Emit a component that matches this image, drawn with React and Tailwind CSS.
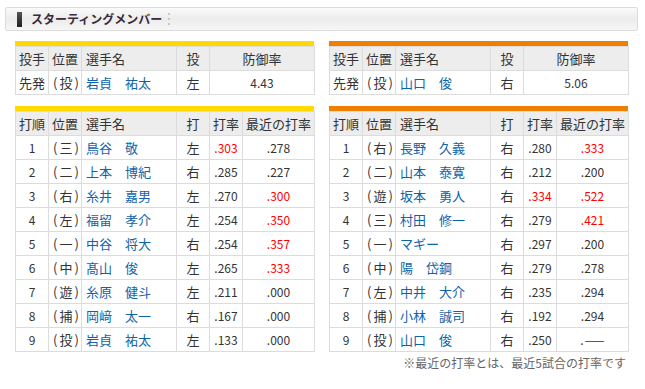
import React from 'react';

const font = { fontFamily: '"Noto Sans CJK JP", "Noto Sans", sans-serif' };

const pitchers = {
  home: { role: '先発', pos: '投', name: '岩貞　祐太', hand: '左', era: '4.43' },
  away: { role: '先発', pos: '投', name: '山口　俊', hand: '右', era: '5.06' },
};

const homeLineup = [
  ['1', '三', '鳥谷　敬', '左', '.303', '.278', true, false],
  ['2', '二', '上本　博紀', '右', '.285', '.227', false, false],
  ['3', '右', '糸井　嘉男', '左', '.270', '.300', false, true],
  ['4', '左', '福留　孝介', '左', '.254', '.350', false, true],
  ['5', '一', '中谷　将大', '右', '.254', '.357', false, true],
  ['6', '中', '髙山　俊', '左', '.265', '.333', false, true],
  ['7', '遊', '糸原　健斗', '左', '.211', '.000', false, false],
  ['8', '捕', '岡﨑　太一', '右', '.167', '.000', false, false],
  ['9', '投', '岩貞　祐太', '左', '.133', '.000', false, false],
];

const awayLineup = [
  ['1', '右', '長野　久義', '右', '.280', '.333', false, true],
  ['2', '二', '山本　泰寛', '右', '.212', '.200', false, false],
  ['3', '遊', '坂本　勇人', '右', '.334', '.522', true, true],
  ['4', '三', '村田　修一', '右', '.279', '.421', false, true],
  ['5', '一', 'マギー', '右', '.297', '.200', false, false],
  ['6', '中', '陽　岱鋼', '右', '.279', '.278', false, false],
  ['7', '左', '中井　大介', '右', '.235', '.294', false, false],
  ['8', '捕', '小林　誠司', '右', '.192', '.294', false, false],
  ['9', '投', '山口　俊', '右', '.250', null, false, false],
];

const th = 'border border-[#dcdcdc] bg-[#ededed] font-normal h-6 p-0';
const td = 'border border-[#dcdcdc] h-6 p-0';

// position like （三） drawn with narrow parens, as in the original
function Pos({ c }) {
  return (
    <span className="pl-[4px] whitespace-nowrap">
      (<span className="mx-[2px]">{c}</span>)
    </span>
  );
}

function PitcherTable({ p, bar }) {
  return (
    <div className="w-[299px]">
      <div className={`h-[5px] ${bar}`} />
      <table className="w-[299px] border-collapse table-fixed text-[13px] text-[#333]">
        <colgroup>
          <col className="w-[33px]" />
          <col className="w-[33px]" />
          <col className="w-[95px]" />
          <col className="w-[33px]" />
          <col className="w-[105px]" />
        </colgroup>
        <thead>
          <tr>
            <th className={`${th} text-left pl-[3px]`}>投手</th>
            <th className={`${th} text-left pl-[3px]`}>位置</th>
            <th className={`${th} text-left pl-[4px]`}>選手名</th>
            <th className={`${th} text-center`}>投</th>
            <th className={`${th} text-center`}>防御率</th>
          </tr>
        </thead>
        <tbody>
          <tr>
            <td className={`${td} pl-[3px]`}>{p.role}</td>
            <td className={td}><Pos c={p.pos} /></td>
            <td className={`${td} pl-[4px] text-[#0f64a8] whitespace-pre`}>{p.name}</td>
            <td className={`${td} text-center`}>{p.hand}</td>
            <td className={`${td} text-center text-[12px]`}>{p.era}</td>
          </tr>
        </tbody>
      </table>
    </div>
  );
}

function LineupTable({ rows, bar }) {
  return (
    <div className="w-[299px]">
      <div className={`h-[5px] ${bar}`} />
      <table className="w-[299px] border-collapse table-fixed text-[13px] text-[#333]">
        <colgroup>
          <col className="w-[33px]" />
          <col className="w-[33px]" />
          <col className="w-[95px]" />
          <col className="w-[33px]" />
          <col className="w-[33px]" />
          <col className="w-[72px]" />
        </colgroup>
        <thead>
          <tr>
            <th className={`${th} text-left pl-[3px]`}>打順</th>
            <th className={`${th} text-left pl-[3px]`}>位置</th>
            <th className={`${th} text-left pl-[4px]`}>選手名</th>
            <th className={`${th} text-center`}>打</th>
            <th className={`${th} text-center`}>打率</th>
            <th className={`${th} text-center whitespace-nowrap`}>最近の打率</th>
          </tr>
        </thead>
        <tbody>
          {rows.map(([no, pos, name, hand, avg, recent, avgRed, recentRed]) => (
            <tr key={no}>
              <td className={`${td} text-center text-[12px]`}>{no}</td>
              <td className={td}><Pos c={pos} /></td>
              <td className={`${td} pl-[4px] text-[#0f64a8] whitespace-pre`}>{name}</td>
              <td className={`${td} text-center`}>{hand}</td>
              <td className={`${td} text-center text-[12px] ${avgRed ? 'text-[#ff0000]' : ''}`}>{avg}</td>
              <td className={`${td} text-center text-[12px] ${recentRed ? 'text-[#ff0000]' : ''}`}>
                {recent ?? (
                  <span>.<span className="ml-[1px] text-[12px]">——</span></span>
                )}
              </td>
            </tr>
          ))}
        </tbody>
      </table>
    </div>
  );
}

export default function App() {
  return (
    <div className="w-[645px] h-[389px] bg-white pt-[7px] overflow-hidden" style={font}>
      {/* section header */}
      <div className="ml-[5px] w-[633px] h-[24px] rounded-[2px] border border-[#dcdcdc] bg-gradient-to-b from-[#fafafa] via-[#ececec] to-[#f6f6f6] flex items-center">
        <div className="ml-[11px] w-[5px] h-[15px] bg-gradient-to-b from-[#555] to-[#222]" />
        <span className="ml-[9px] text-[12px] font-bold text-[#3a2a3a] leading-none">スターティングメンバー</span>
        <div className="ml-[6px] flex flex-col gap-[3px]">
          <span className="w-[2px] h-[2px] bg-[#c8c8c8]" />
          <span className="w-[2px] h-[2px] bg-[#c8c8c8]" />
          <span className="w-[2px] h-[2px] bg-[#c8c8c8]" />
        </div>
      </div>

      <div className="pl-[15px] pt-[10px] flex gap-[15px]">
        <div className="flex flex-col gap-[11px]">
          <PitcherTable p={pitchers.home} bar="bg-[#ffd900]" />
          <LineupTable rows={homeLineup} bar="bg-[#ffd900]" />
        </div>
        <div className="flex flex-col gap-[11px]">
          <PitcherTable p={pitchers.away} bar="bg-[#ee7f00]" />
          <LineupTable rows={awayLineup} bar="bg-[#ee7f00]" />
          <p className="text-right text-[12px] text-[#666] -mt-[9px] pr-[2px]">※最近の打率とは、最近5試合の打率です</p>
        </div>
      </div>
    </div>
  );
}
